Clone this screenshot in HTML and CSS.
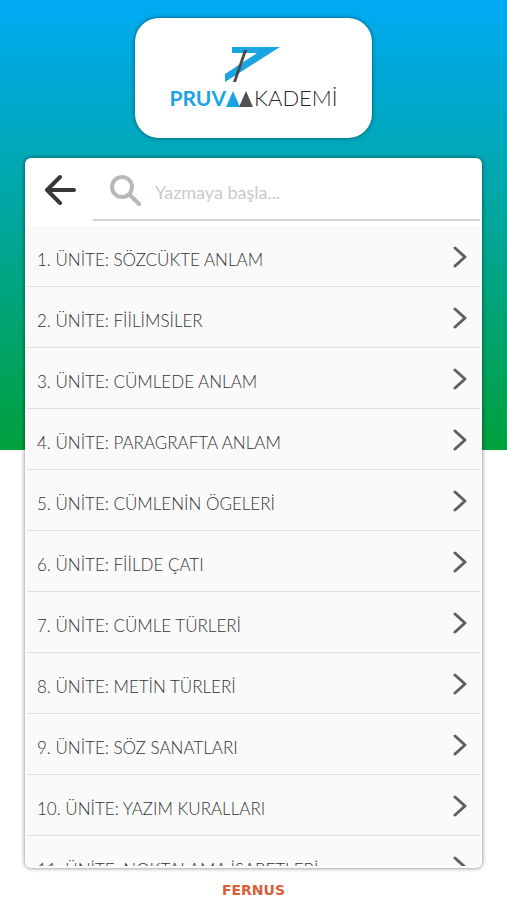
FILE: index.html
```html
<!DOCTYPE html>
<html lang="tr">
<head>
<meta charset="utf-8">
<meta name="viewport" content="width=device-width, initial-scale=1">
<title>Pruva Akademi</title>
<link rel="stylesheet" href="styles.css">
</head>
<body>
<svg class="symbols" aria-hidden="true">
  <symbol id="chevron" viewBox="0 0 14 22"><path d="M2 2 12 11 2 20" fill="none" stroke="currentColor" stroke-width="3" stroke-linecap="round" stroke-linejoin="round"/></symbol>
</svg>
<header class="brand">
  <svg class="brand-mark" viewBox="0 0 56 36" aria-hidden="true">
    <path d="M8 0H56L1 35V27L33 6H8Z" fill="#1ba4e2"/>
    <path d="M20 3H23L12 35H9Z" fill="#48484c"/>
  </svg>
  <div class="brand-name">
    <span class="brand-first">PRUV</span>
    <svg class="brand-peaks" viewBox="0 0 28 17" aria-hidden="true">
      <path d="M7 1 14 17H0Z" fill="#1ba4e2"/>
      <path d="M20 1 27 17H13Z" fill="#505054"/>
    </svg>
    <span class="brand-second">KADEMİ</span>
  </div>
</header>
<main class="panel">
  <div class="toolbar">
    <button class="back" type="button" aria-label="Geri">
      <svg viewBox="0 0 32 32" aria-hidden="true"><path d="M30 17H3M16 4 3 17 16 30" fill="none" stroke="currentColor" stroke-width="4" stroke-linecap="round" stroke-linejoin="round"/></svg>
    </button>
    <label class="search">
      <svg viewBox="0 0 32 32" aria-hidden="true"><circle cx="13" cy="12" r="10" fill="none" stroke="currentColor" stroke-width="4"/><path d="M21 20 30 29" stroke="currentColor" stroke-width="4" stroke-linecap="round"/></svg>
      <input type="search" placeholder="Yazmaya başla..." aria-label="Ara">
    </label>
  </div>
  <nav class="units">
    <a href="#u1">1. ÜNİTE: SÖZCÜKTE ANLAM<svg><use href="#chevron"/></svg></a>
    <a href="#u2">2. ÜNİTE: FİİLİMSİLER<svg><use href="#chevron"/></svg></a>
    <a href="#u3">3. ÜNİTE: CÜMLEDE ANLAM<svg><use href="#chevron"/></svg></a>
    <a href="#u4">4. ÜNİTE: PARAGRAFTA ANLAM<svg><use href="#chevron"/></svg></a>
    <a href="#u5">5. ÜNİTE: CÜMLENİN ÖGELERİ<svg><use href="#chevron"/></svg></a>
    <a href="#u6">6. ÜNİTE: FİİLDE ÇATI<svg><use href="#chevron"/></svg></a>
    <a href="#u7">7. ÜNİTE: CÜMLE TÜRLERİ<svg><use href="#chevron"/></svg></a>
    <a href="#u8">8. ÜNİTE: METİN TÜRLERİ<svg><use href="#chevron"/></svg></a>
    <a href="#u9">9. ÜNİTE: SÖZ SANATLARI<svg><use href="#chevron"/></svg></a>
    <a href="#u10">10. ÜNİTE: YAZIM KURALLARI<svg><use href="#chevron"/></svg></a>
    <a href="#u11">11. ÜNİTE: NOKTALAMA İŞARETLERİ<svg><use href="#chevron"/></svg></a>
  </nav>
</main>
<footer class="footer">FERNUS</footer>
</body>
</html>
```
FILE: styles.css
```css
* {
  box-sizing: border-box;
}

body {
  margin: 0;
  height: 100vh;
  padding: 18px 25px 0;
  display: flex;
  flex-direction: column;
  font-family: Lato, "Open Sans", sans-serif;
  background: linear-gradient(#00aaf4, #00a8b4 36%, #00a03c) top / 100% 50% no-repeat #fff;
}

.symbols {
  display: none;
}

.brand {
  flex: none;
  align-self: center;
  width: 52%;
  height: 120px;
  padding-top: 29px;
  display: flex;
  flex-direction: column;
  align-items: center;
  background: #fff;
  border-radius: 24px;
  box-shadow: 0 0 4px rgba(0, 0, 0, 0.5);
}

.brand-mark {
  width: 56px;
  height: 36px;
  margin-right: 4px;
}

.brand-name {
  display: flex;
  align-items: center;
  margin-top: 2px;
  line-height: 26px;
  font-size: 21px;
}

.brand-first {
  color: #1ba4e2;
  font-weight: 700;
}

.brand-peaks {
  width: 28px;
  height: 17px;
}

.brand-second {
  color: #28282c;
  font-size: 22px;
  font-weight: 300;
}

.panel {
  flex: 1;
  min-height: 0;
  margin-top: 20px;
  padding: 0 2px 2px;
  display: flex;
  flex-direction: column;
  overflow: hidden;
  background: #fff;
  border-radius: 6px;
  box-shadow: 0 0 4px rgba(0, 0, 0, 0.55);
}

.toolbar {
  flex: none;
  height: 68px;
  padding-bottom: 5px;
  display: flex;
}

.back {
  width: 66px;
  padding: 2px 0 0;
  border: 0;
  background: none;
  color: #38383a;
}

.back svg,
.search svg {
  flex: none;
  width: 32px;
  height: 32px;
}

.search {
  flex: 1;
  display: flex;
  align-items: center;
  gap: 14px;
  padding: 4px 0 0 16px;
  border-bottom: 2px solid #d2d2d2;
  color: #b8b8b8;
}

.search input {
  flex: 1;
  min-width: 0;
  padding: 3px 0 0;
  border: 0;
  outline: 0;
  background: none;
  font: 18px Lato, "Open Sans", sans-serif;
  color: #555;
}

.search input::placeholder {
  color: #cacaca;
}

.units {
  flex: 1;
  min-height: 0;
  overflow: hidden;
  background: #fafafa;
}

.units a {
  height: 61px;
  padding: 6px 13px 0 10px;
  display: flex;
  align-items: center;
  justify-content: space-between;
  border-bottom: 1px solid #dfdfdf;
  font-size: 17px;
  font-weight: 300;
  color: #333;
  text-decoration: none;
}

.units svg {
  width: 14px;
  height: 22px;
  margin-bottom: 4px;
  color: #606062;
}

.footer {
  flex: none;
  height: 32px;
  padding-top: 6px;
  text-align: center;
  font: 700 14px/32px "DejaVu Sans", sans-serif;
  color: #d9603b;
}
```
